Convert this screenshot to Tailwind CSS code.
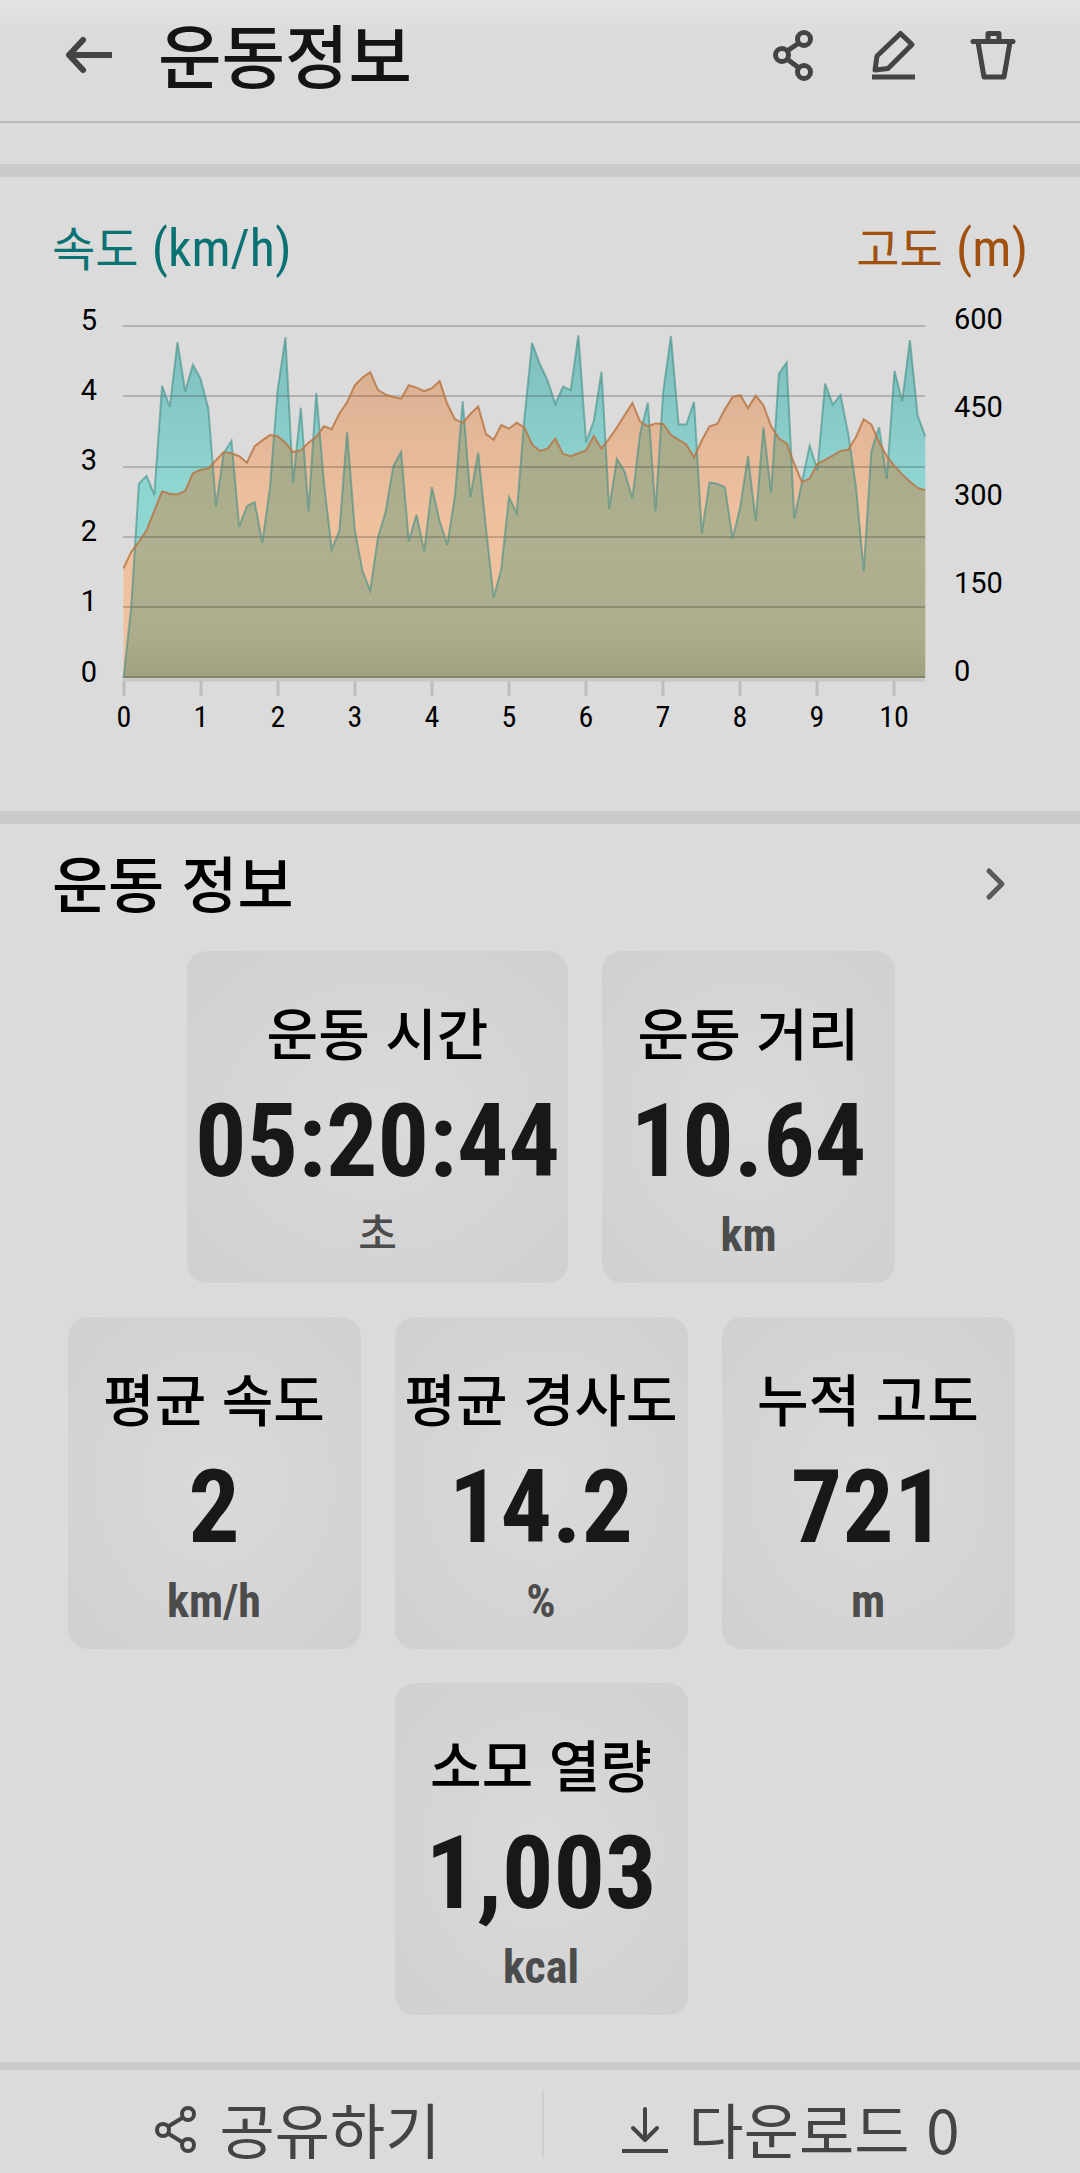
<!DOCTYPE html>
<html lang="ko">
<head>
    <meta charset="UTF-8">
    <meta name="viewport" content="width=device-width, initial-scale=1.0">
    <title>운동정보</title>
    <script src="https://cdn.jsdelivr.net/npm/@tailwindcss/browser@4"></script>
</head>
<body class="bg-[#dbdbdb] text-black font-['Noto_Sans_CJK_KR',sans-serif]">
    <!-- Header -->
    <header class="flex items-center h-[123px] pl-[60px] pr-[57px] pb-3 border-b-2 border-[#b9b9b9] bg-linear-to-b from-[#e3e3e3] to-[#dbdbdb] to-30% text-[#444]">
        <button type="button" aria-label="뒤로" class="w-[60px] h-[60px]">
            <svg class="w-full h-full" viewBox="0 0 60 60" fill="none" stroke="currentColor" stroke-width="6" stroke-linejoin="round">
                <path stroke-linecap="round" d="M23 15L9 30l14 15"/>
                <path d="M9 30h43"/>
            </svg>
        </button>
        <h1 class="ml-[38px] pb-1 flex-1 text-[69px] leading-[80px] font-medium text-[#141414]">운동정보</h1>
        <div class="flex gap-10">
            <button type="button" aria-label="공유" class="w-[60px] h-[60px]">
                <svg class="w-full h-full" viewBox="0 0 60 60" fill="none" stroke="currentColor" stroke-width="5">
                    <circle cx="41" cy="14" r="6.5"/>
                    <circle cx="19" cy="30" r="6.5"/>
                    <circle cx="41" cy="47" r="6.5"/>
                    <path d="M24 26l12-8M24 34l12 9"/>
                </svg>
            </button>
            <button type="button" aria-label="수정" class="w-[60px] h-[60px]">
                <svg class="w-full h-full" viewBox="0 0 60 60" fill="none" stroke="currentColor" stroke-width="5">
                    <path stroke-linejoin="round" d="M37.500 8.500L49 19.500 25 43.500 12 45l2-14z"/>
                    <path d="M9 52h43"/>
                </svg>
            </button>
            <button type="button" aria-label="삭제" class="w-[60px] h-[60px]">
                <svg class="w-full h-full" viewBox="0 0 60 60" fill="none" stroke="currentColor" stroke-width="5" stroke-linejoin="round">
                    <path stroke-linecap="round" d="M10 16.500h40"/>
                    <path d="M15 17l6 35h20l6-35M25 16V8.500h11V16"/>
                </svg>
            </button>
        </div>
    </header>

    <main>
        <!-- Speed / altitude chart -->
        <section class="mt-[41px] border-t-[13px] border-[#cacccb]">
            <div class="flex justify-between h-[105px] px-[52px] pt-9 text-[47px] leading-[66px]">
                <span class="text-[#0b7273]">속도 <span class="text-[52px] font-['Roboto_Condensed',Roboto,sans-serif]">(km/h)</span></span>
                <span class="text-[#a0500f]">고도 <span class="text-[52px] font-['Roboto_Condensed',Roboto,sans-serif]">(m)</span></span>
            </div>
            <svg id="chart" class="w-full" viewBox="0 282 1080 529" role="img" aria-label="속도와 고도">
                <defs>
                    <clipPath id="alt-clip"><path class="alt-area"/></clipPath>
                    <linearGradient id="speed-fill" x1="0" y1="330" x2="0" y2="480" gradientUnits="userSpaceOnUse">
                        <stop offset="0" stop-color="#7dbcbc"/>
                        <stop offset="1" stop-color="#8fd5d1"/>
                    </linearGradient>
                    <linearGradient id="alt-fill" x1="0" y1="370" x2="0" y2="520" gradientUnits="userSpaceOnUse">
                        <stop offset="0" stop-color="#dab093"/>
                        <stop offset="1" stop-color="#efc19f"/>
                    </linearGradient>
                    <linearGradient id="both-fill" x1="0" y1="470" x2="0" y2="678" gradientUnits="userSpaceOnUse">
                        <stop offset="0" stop-color="#aaac8c"/>
                        <stop offset="0.400" stop-color="#b0b090"/>
                        <stop offset="0.800" stop-color="#acad8c"/>
                        <stop offset="1" stop-color="#a0a180"/>
                    </linearGradient>
                </defs>
                <path class="speed-area" fill="url(#speed-fill)"/>
                <path class="alt-area" fill="url(#alt-fill)"/>
                <path class="speed-area" fill="url(#both-fill)" clip-path="url(#alt-clip)"/>
                <path d="M123 326H925M123 396H925M123 467H925M123 537H925M123 607H925M123 677H925" stroke="#000" stroke-opacity="0.180" stroke-width="2" fill="none"/>
                <path id="speed-line" fill="none" stroke="#3f8f86" stroke-opacity="0.600" stroke-width="2"/>
                <path id="alt-line" fill="none" stroke="#b97744" stroke-opacity="0.850" stroke-width="2"/>
                <path d="M123 680H925" stroke="#c6c8c6" stroke-width="3"/>
                <path d="M124 681v15M201 681v15M278 681v15M355 681v15M432 681v15M509 681v15M586 681v15M663 681v15M740 681v15M817 681v15M894 681v15" stroke="#bdbdbd" stroke-width="3"/>
                <g class="font-[Roboto,sans-serif] text-[29px]" text-anchor="end">
                    <text x="97" y="330">5</text>
                    <text x="97" y="400">4</text>
                    <text x="97" y="470">3</text>
                    <text x="97" y="541">2</text>
                    <text x="97" y="611">1</text>
                    <text x="97" y="682">0</text>
                </g>
                <g class="font-[Roboto,sans-serif] text-[29px]">
                    <text x="954" y="329">600</text>
                    <text x="954" y="417">450</text>
                    <text x="954" y="505">300</text>
                    <text x="954" y="593">150</text>
                    <text x="954" y="681">0</text>
                </g>
                <g class="font-['Roboto_Condensed',Roboto,sans-serif] text-[30px]" text-anchor="middle">
                    <text x="124" y="727">0</text>
                    <text x="201" y="727">1</text>
                    <text x="278" y="727">2</text>
                    <text x="355" y="727">3</text>
                    <text x="432" y="727">4</text>
                    <text x="509" y="727">5</text>
                    <text x="586" y="727">6</text>
                    <text x="663" y="727">7</text>
                    <text x="740" y="727">8</text>
                    <text x="817" y="727">9</text>
                    <text x="894" y="727">10</text>
                </g>
            </svg>
        </section>

        <!-- Workout summary -->
        <section class="border-t-[13px] border-[#cacccb]">
            <div class="flex items-center justify-between pl-[52px] pr-[54px] pt-4">
                <h2 class="pb-1 text-[61px] leading-[84px] font-medium">운동 정보</h2>
                <button type="button" aria-label="운동 정보 더보기" class="w-[60px] h-[60px]">
                    <svg class="w-full h-full" viewBox="0 0 60 60" fill="none" stroke="#5a5a5a" stroke-width="5" stroke-linecap="round" stroke-linejoin="round">
                        <path d="M23 17l13 13-13 13"/>
                    </svg>
                </button>
            </div>
            <div class="flex flex-wrap justify-center gap-[34px] pl-[42px] pr-10 pt-[23px] pb-[47px] text-center">
                <div class="w-[381px] h-[332px] pt-[38px] rounded-[20px] bg-radial from-[#dadada] to-[#d0d0d0]">
                    <h3 class="text-[56px] leading-[84px] font-medium">운동 시간</h3>
                    <p class="mt-3 text-[102px] leading-[112px] font-bold font-['Roboto_Condensed',Roboto,sans-serif] text-[#181818]">05:20:44</p>
                    <p class="mt-1 text-[42px] leading-[60px] font-medium text-[#4c4c4c]">초</p>
                </div>
                <div class="w-[293px] h-[332px] pt-[38px] rounded-[20px] bg-radial from-[#dadada] to-[#d0d0d0]">
                    <h3 class="text-[56px] leading-[84px] font-medium">운동 거리</h3>
                    <p class="mt-3 text-[102px] leading-[112px] font-bold font-['Roboto_Condensed',Roboto,sans-serif] text-[#181818]">10.64</p>
                    <p class="mt-2 text-[46px] leading-[60px] font-bold font-['Roboto_Condensed',Roboto,sans-serif] text-[#4c4c4c]">km</p>
                </div>
                <div class="w-[293px] h-[332px] pt-[38px] rounded-[20px] bg-radial from-[#dadada] to-[#d0d0d0]">
                    <h3 class="text-[56px] leading-[84px] font-medium">평균 속도</h3>
                    <p class="mt-3 text-[102px] leading-[112px] font-bold font-['Roboto_Condensed',Roboto,sans-serif] text-[#181818]">2</p>
                    <p class="mt-2 text-[46px] leading-[60px] font-bold font-['Roboto_Condensed',Roboto,sans-serif] text-[#4c4c4c]">km/h</p>
                </div>
                <div class="w-[293px] h-[332px] pt-[38px] rounded-[20px] bg-radial from-[#dadada] to-[#d0d0d0]">
                    <h3 class="text-[56px] leading-[84px] font-medium">평균 경사도</h3>
                    <p class="mt-3 text-[102px] leading-[112px] font-bold font-['Roboto_Condensed',Roboto,sans-serif] text-[#181818]">14.2</p>
                    <p class="mt-2 text-[46px] leading-[60px] font-bold font-['Roboto_Condensed',Roboto,sans-serif] text-[#4c4c4c]">%</p>
                </div>
                <div class="w-[293px] h-[332px] pt-[38px] rounded-[20px] bg-radial from-[#dadada] to-[#d0d0d0]">
                    <h3 class="text-[56px] leading-[84px] font-medium">누적 고도</h3>
                    <p class="mt-3 text-[102px] leading-[112px] font-bold font-['Roboto_Condensed',Roboto,sans-serif] text-[#181818]">721</p>
                    <p class="mt-2 text-[46px] leading-[60px] font-bold font-['Roboto_Condensed',Roboto,sans-serif] text-[#4c4c4c]">m</p>
                </div>
                <div class="w-[293px] h-[332px] pt-[38px] rounded-[20px] bg-radial from-[#dadada] to-[#d0d0d0]">
                    <h3 class="text-[56px] leading-[84px] font-medium">소모 열량</h3>
                    <p class="mt-3 text-[102px] leading-[112px] font-bold font-['Roboto_Condensed',Roboto,sans-serif] text-[#181818]">1,003</p>
                    <p class="mt-2 text-[46px] leading-[60px] font-bold font-['Roboto_Condensed',Roboto,sans-serif] text-[#4c4c4c]">kcal</p>
                </div>
            </div>
        </section>
    </main>

    <!-- Bottom actions -->
    <footer class="flex items-center h-[111px] pt-4 border-t-8 border-[#cacccb] text-[60px] leading-[84px] text-[#444]">
        <button type="button" class="flex-1 flex items-center justify-center gap-5 pl-[50px]">
            <svg class="w-12 h-12" viewBox="0 0 48 48" fill="none" stroke="currentColor" stroke-width="4">
                <circle cx="36" cy="8" r="6"/>
                <circle cx="11" cy="24" r="6"/>
                <circle cx="36" cy="39" r="6"/>
                <path d="M17 20l13-8M17 28l13 8"/>
            </svg>
            <span class="pb-1">공유하기</span>
        </button>
        <div class="w-[2px] h-[68px] mb-3 bg-[#cfcfcf]"></div>
        <button type="button" class="flex-1 flex items-center justify-center gap-5 pr-[44px]">
            <svg class="w-12 h-12" viewBox="0 0 48 48" fill="none" stroke="currentColor" stroke-width="4">
                <path stroke-linecap="round" stroke-linejoin="round" d="M24 3v31M12 22l12 12 12-12"/>
                <path d="M1 45h46"/>
            </svg>
            <span class="pb-1">다운로드 0</span>
        </button>
    </footer>

    <script>
        // one sample every 0.1 km
        const speed = [
            0, 1, 2.76, 2.87, 2.6, 4.15, 3.85, 4.77, 4.07, 4.45, 4.25, 3.83, 2.44, 3.19, 3.37,
            2.15, 2.44, 2.5, 1.92, 2.71, 4.09, 4.84, 2.77, 3.84, 2.37, 4.05, 2.76, 1.83, 2.09, 3.49,
            2.1, 1.52, 1.24, 1.99, 2.36, 3.01, 3.21, 1.94, 2.32, 1.8, 2.71, 2.23, 1.89, 2.59, 3.93,
            2.57, 3.2, 2.14, 1.14, 1.55, 2.57, 2.34, 3.68, 4.76, 4.46, 4.23, 3.89, 4.14, 4.09, 4.87,
            3.35, 3.65, 4.35, 2.4, 3.11, 2.93, 2.55, 3.47, 3.91, 2.37, 4.06, 4.86, 3.6, 3.6, 3.92,
            2.06, 2.78, 2.76, 2.71, 1.98, 2.43, 3.15, 2.23, 3.56, 2.63, 4.32, 4.48, 2.27, 2.78, 3.3,
            2.95, 4.18, 3.88, 4.02, 3.47, 2.71, 1.52, 3.22, 3.56, 2.83, 4.36, 3.93, 4.8, 3.73, 3.43
        ];
        const altitude = [
            187, 215, 232, 252, 285, 318, 314, 313, 319, 349, 355, 357, 371, 385, 383,
            378, 367, 395, 405, 414, 412, 401, 385, 388, 401, 411, 429, 424, 451, 470,
            499, 512, 521, 491, 483, 479, 476, 499, 495, 489, 494, 506, 467, 441, 435,
            450, 463, 416, 406, 431, 425, 435, 427, 398, 387, 391, 408, 382, 378, 383,
            388, 412, 391, 408, 427, 448, 469, 437, 429, 434, 433, 414, 406, 398, 376,
            405, 429, 433, 458, 479, 482, 460, 481, 465, 429, 408, 400, 365, 334, 340,
            365, 372, 379, 387, 389, 411, 441, 432, 402, 378, 361, 347, 335, 324, 320
        ];

        const left = 123.5, bottom = 678, height = 352, step = 7.71;
        const line = (data, max) => 'M' + data.map((v, i) =>
            (left + i * step).toFixed(1) + ' ' + (bottom - v / max * height).toFixed(1)).join('L');

        function draw(name, data, max) {
            const d = line(data, max);
            const end = (left + (data.length - 1) * step).toFixed(1);
            document.getElementById(name + '-line').setAttribute('d', d);
            document.querySelectorAll('.' + name + '-area').forEach(p =>
                p.setAttribute('d', d + 'L' + end + ' ' + bottom + 'L' + left + ' ' + bottom + 'Z'));
        }

        draw('speed', speed, 5);
        draw('alt', altitude, 600);
    </script>
</body>
</html>
